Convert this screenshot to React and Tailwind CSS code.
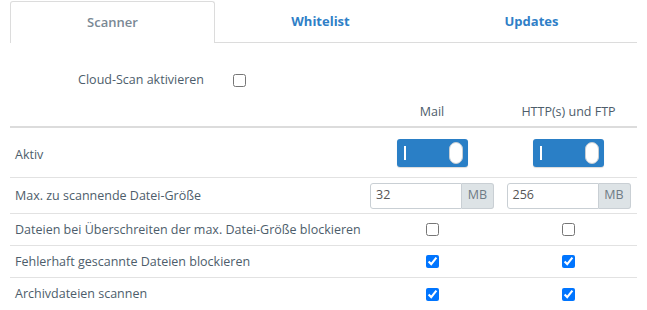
import React from "react";

function Toggle() {
  return (
    <div className="relative w-[71px] h-[28px] rounded-[3px] bg-[#2a7fc6] shadow-[0_1px_1px_rgba(0,0,0,0.15)]">
      <div className="absolute left-[7px] top-[7px] w-[2px] h-[14px] bg-white" />
      <div className="absolute right-[5px] top-[3px] w-[14px] h-[22px] rounded-[7px] bg-white border border-[#c8ced3]" />
    </div>
  );
}

function SizeInput({ value }) {
  return (
    <div className="flex w-[124px] h-[26px] text-[12.5px]">
      <div className="flex-1 flex items-center pl-[5px] border border-[#c9cfd4] rounded-l-[3px] text-[#555] bg-white">
        {value}
      </div>
      <div className="w-[32px] flex items-center justify-center bg-[#dde3e6] border border-l-0 border-[#c9cfd4] rounded-r-[3px] text-[#6f7b85]">
        MB
      </div>
    </div>
  );
}

function Cb({ checked }) {
  return <input type="checkbox" defaultChecked={checked} className="w-[13px] h-[13px]" />;
}

export default function App() {
  return (
    <div className="w-[647px] h-[310px] overflow-hidden bg-white px-[10px] pt-[1px] text-[12.5px] text-[#4d5d6b] font-['Open_Sans',sans-serif] whitespace-nowrap">
      <div className="flex h-[42px] text-[13px]">
        <div className="w-[205px] flex items-center justify-center border border-b-0 border-[#dcdcdc] rounded-t-[3px] text-[#7a8894] font-semibold">
          Scanner
        </div>
        <div className="flex-1 flex items-center justify-center border-b border-[#dcdcdc] text-[#2f7fc7] font-bold">
          Whitelist
        </div>
        <div className="flex-1 flex items-center justify-center border-b border-[#dcdcdc] text-[#2f7fc7] font-bold">
          Updates
        </div>
      </div>

      <div className="flex items-center h-[26px] mt-[24px]">
        <div className="w-[194px] text-right">Cloud-Scan aktivieren</div>
        <div className="ml-[29px] flex items-center">
          <Cb checked={false} />
        </div>
      </div>

      <div className="grid grid-cols-[354px_136px_137px]">
        <div className="h-[35px] border-b-2 border-[#dcdcdc]" />
        <div className="h-[35px] border-b-2 border-[#dcdcdc] flex items-end justify-center pb-[4px]">Mail</div>
        <div className="h-[35px] border-b-2 border-[#dcdcdc] flex items-end justify-center pb-[4px]">HTTP(s) und FTP</div>

        <div className="h-[50px] border-b border-[#e2e2e2] flex items-center pl-[5px] pt-[5px]">Aktiv</div>
        <div className="h-[50px] border-b border-[#e2e2e2] flex items-center justify-center"><Toggle /></div>
        <div className="h-[50px] border-b border-[#e2e2e2] flex items-center justify-center"><Toggle /></div>

        <div className="h-[36px] border-b border-[#e2e2e2] flex items-center pl-[5px] pt-[2px]">Max. zu scannende Datei-Größe</div>
        <div className="h-[36px] border-b border-[#e2e2e2] flex items-center justify-center"><SizeInput value="32" /></div>
        <div className="h-[36px] border-b border-[#e2e2e2] flex items-center justify-center"><SizeInput value="256" /></div>

        <div className="h-[32px] border-b border-[#e2e2e2] flex items-center pl-[5px] pt-[2px]">Dateien bei Überschreiten der max. Datei-Größe blockieren</div>
        <div className="h-[32px] border-b border-[#e2e2e2] flex items-center justify-center"><Cb checked={false} /></div>
        <div className="h-[32px] border-b border-[#e2e2e2] flex items-center justify-center"><Cb checked={false} /></div>

        <div className="h-[32px] border-b border-[#e2e2e2] flex items-center pl-[5px] pt-[2px]">Fehlerhaft gescannte Dateien blockieren</div>
        <div className="h-[32px] border-b border-[#e2e2e2] flex items-center justify-center"><Cb checked /></div>
        <div className="h-[32px] border-b border-[#e2e2e2] flex items-center justify-center"><Cb checked /></div>

        <div className="h-[32px] flex items-center pl-[5px]">Archivdateien scannen</div>
        <div className="h-[32px] flex items-center justify-center"><Cb checked /></div>
        <div className="h-[32px] flex items-center justify-center"><Cb checked /></div>
      </div>
    </div>
  );
}
